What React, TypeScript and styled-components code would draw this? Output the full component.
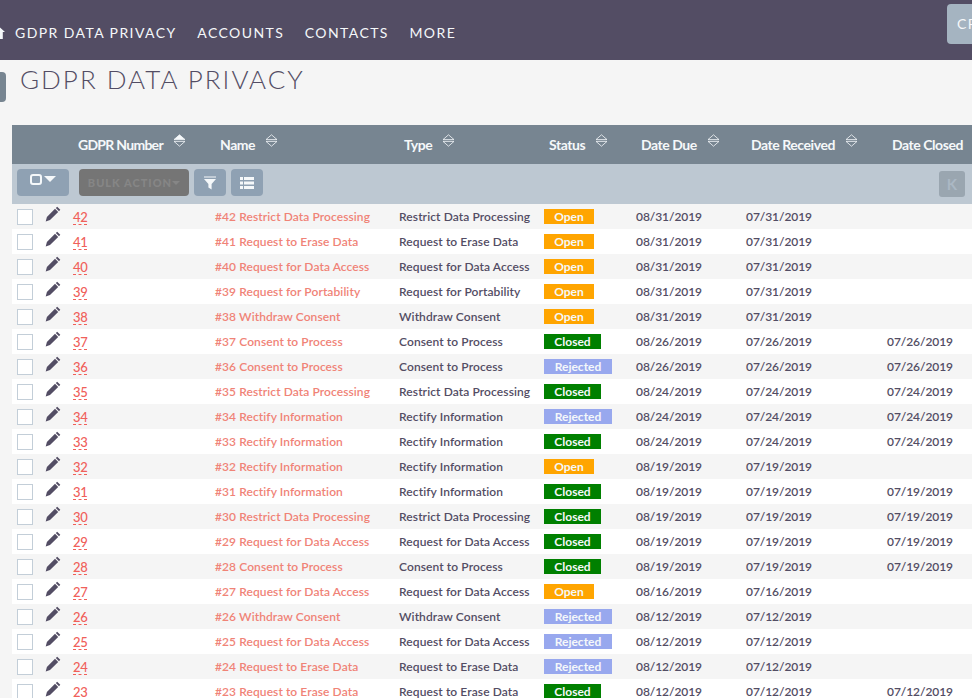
import React from 'react';
import styled, { createGlobalStyle } from 'styled-components';

type Status = 'Open' | 'Closed' | 'Rejected';
type Row = [number, string, Status, string, string, string];

const ROWS: Row[] = [
    [42, 'Restrict Data Processing', 'Open', '08/31/2019', '07/31/2019', ''],
    [41, 'Request to Erase Data', 'Open', '08/31/2019', '07/31/2019', ''],
    [40, 'Request for Data Access', 'Open', '08/31/2019', '07/31/2019', ''],
    [39, 'Request for Portability', 'Open', '08/31/2019', '07/31/2019', ''],
    [38, 'Withdraw Consent', 'Open', '08/31/2019', '07/31/2019', ''],
    [37, 'Consent to Process', 'Closed', '08/26/2019', '07/26/2019', '07/26/2019'],
    [36, 'Consent to Process', 'Rejected', '08/26/2019', '07/26/2019', '07/26/2019'],
    [35, 'Restrict Data Processing', 'Closed', '08/24/2019', '07/24/2019', '07/24/2019'],
    [34, 'Rectify Information', 'Rejected', '08/24/2019', '07/24/2019', '07/24/2019'],
    [33, 'Rectify Information', 'Closed', '08/24/2019', '07/24/2019', '07/24/2019'],
    [32, 'Rectify Information', 'Open', '08/19/2019', '07/19/2019', ''],
    [31, 'Rectify Information', 'Closed', '08/19/2019', '07/19/2019', '07/19/2019'],
    [30, 'Restrict Data Processing', 'Closed', '08/19/2019', '07/19/2019', '07/19/2019'],
    [29, 'Request for Data Access', 'Closed', '08/19/2019', '07/19/2019', '07/19/2019'],
    [28, 'Consent to Process', 'Closed', '08/19/2019', '07/19/2019', '07/19/2019'],
    [27, 'Request for Data Access', 'Open', '08/16/2019', '07/16/2019', ''],
    [26, 'Withdraw Consent', 'Rejected', '08/12/2019', '07/12/2019', ''],
    [25, 'Request for Data Access', 'Rejected', '08/12/2019', '07/12/2019', ''],
    [24, 'Request to Erase Data', 'Rejected', '08/12/2019', '07/12/2019', ''],
    [23, 'Request to Erase Data', 'Closed', '08/12/2019', '07/12/2019', '07/12/2019'],
];

const STATUS_BG: Record<Status, string> = {
    Open: '#ffa500',
    Closed: '#008000',
    Rejected: '#98a8ee',
};
const STATUS_W: Record<Status, number> = { Open: 50, Closed: 57, Rejected: 68 };

const COLS = '61px 142px 184px 145px 92px 110px 141px 200px';

const GlobalStyle = createGlobalStyle`
    html, body {
        margin: 0;
        padding: 0;
        height: 100%;
        overflow: hidden;
        background: #f5f5f5;
        font-family: Lato, "Liberation Sans", sans-serif;
    }
`;
const Page = styled.div`
    width: 972px;
    height: 698px;
    overflow: hidden;
`;
const TopBar = styled.div`
    height: 60px;
    background: #534d64;
    display: flex;
    align-items: flex-start;
    overflow: hidden;
    position: relative;
`;
const Nav = styled.nav`
    display: flex;
    align-items: center;
    height: 65px;
    margin-left: -8px;
`;
const NavItem = styled.a`
    color: #f5f8fa;
    font-size: 14px;
    letter-spacing: 1.42px;
    margin-right: 20.6px;
    white-space: nowrap;
`;
const HomeIcon = styled.svg`
    width: 13px;
    height: 13px;
    margin-right: 10px;
    flex: none;
`;
const CreateButton = styled.div`
    position: absolute;
    left: 947px;
    top: 4px;
    width: 80px;
    height: 40px;
    box-sizing: border-box;
    padding-left: 10px;
    background: #a5b4c1;
    border-radius: 4px;
    color: #f5f8fa;
    font-size: 14px;
    letter-spacing: 1.5px;
    line-height: 40px;
`;
const TitleRow = styled.div`
    height: 65px;
    display: flex;
    align-items: flex-start;
`;
const SideTab = styled.div`
    width: 6px;
    height: 30px;
    margin-top: 12px;
    background: #778591;
    border-radius: 0 4px 4px 0;
    flex: none;
`;
const Title = styled.h2`
    margin: 3px 0 0 14px;
    color: #534d64;
    font-size: 26px;
    line-height: 32px;
    font-weight: 300;
    letter-spacing: 2px;
    white-space: nowrap;
`;
const Table = styled.div`
    margin-left: 12px;
    width: 960px;
    overflow: hidden;
`;
const HeaderRow = styled.div`
    display: grid;
    grid-template-columns: ${COLS};
    height: 39px;
    background: #778591;
    align-items: center;
`;
const HeaderCell = styled.div<{ $tight?: boolean }>`
    display: flex;
    align-items: center;
    padding: 0 0 1px 5px;
    color: #f5f8fa;
    font-size: 14px;
    font-weight: 700;
    letter-spacing: ${(p) => (p.$tight ? '-0.72px' : '-0.45px')};
    white-space: nowrap;
`;
const SortIcon = styled.svg`
    width: 13px;
    height: 13px;
    margin-left: 10px;
    margin-top: -7px;
    flex: none;
`;
const Toolbar = styled.div`
    height: 40px;
    box-sizing: border-box;
    padding: 0 0 3px 5px;
    background: #bdc8d2;
    display: flex;
    align-items: center;
    position: relative;
`;
const ToolButton = styled.div<{ $w: number; $gap: number }>`
    width: ${(p) => p.$w}px;
    height: 27px;
    margin-right: ${(p) => p.$gap}px;
    background: #8fa1b3;
    border-radius: 4px;
    display: flex;
    align-items: center;
    justify-content: center;
    flex: none;
`;
const SelectGroup = styled.div`
    display: flex;
    align-items: center;
    margin-bottom: 7px;
`;
const BulkButton = styled.div`
    width: 110px;
    height: 27px;
    margin-right: 5px;
    background: #757575;
    border-radius: 4px;
    color: #868686;
    font-size: 11px;
    font-weight: 900;
    letter-spacing: 1px;
    display: flex;
    align-items: center;
    justify-content: center;
    white-space: nowrap;
    flex: none;
`;
const Caret = styled.span<{ $color: string; $size: number }>`
    width: 0;
    height: 0;
    border-left: ${(p) => p.$size}px solid transparent;
    border-right: ${(p) => p.$size}px solid transparent;
    border-top: ${(p) => p.$size}px solid ${(p) => p.$color};
`;
const CheckGlyph = styled.span`
    width: 8px;
    height: 7px;
    border: 2px solid #f5f8fa;
    border-radius: 3px;
    margin-right: 2px;
`;
const PagerButton = styled.div`
    position: absolute;
    left: 927px;
    top: 7px;
    width: 26px;
    height: 26px;
    background: #9aa6b0;
    border-radius: 3px;
    color: #abb8c4;
    font-size: 15px;
    font-weight: 700;
    display: flex;
    align-items: center;
    justify-content: center;
`;
const DataRow = styled.div<{ $odd: boolean }>`
    display: grid;
    grid-template-columns: ${COLS};
    height: 25px;
    align-items: center;
    background: ${(p) => (p.$odd ? '#ffffff' : '#f5f5f5')};
    font-size: 12px;
    white-space: nowrap;
`;
const ActionCell = styled.div`
    display: flex;
    align-items: center;
    padding-left: 5px;
`;
const CheckBox = styled.span`
    width: 14px;
    height: 14px;
    background: #fff;
    border: 1px solid #c3ced8;
    flex: none;
`;
const PencilIcon = styled.svg`
    width: 16px;
    height: 16px;
    margin-left: 12px;
    margin-top: -6px;
    flex: none;
`;
const NumberLink = styled.a`
    justify-self: start;
    color: #f0605a;
    font-size: 13px;
    font-weight: 500;
    letter-spacing: -0.3px;
    line-height: 14px;
    border-bottom: 1px dashed #f0605a;
    margin-top: 1px;
`;
const NameLink = styled.a`
    color: #f08377;
    font-weight: 600;
    letter-spacing: 0.08px;
`;
const TextCell = styled.div`
    color: #534d64;
    font-weight: 600;
    letter-spacing: 0.1px;
`;
const DateCell = styled.div`
    color: #534d64;
    font-weight: 600;
    letter-spacing: -0.08px;
`;
const Badge = styled.span<{ $status: Status }>`
    display: block;
    width: ${(p) => STATUS_W[p.$status]}px;
    height: 15px;
    line-height: 16px;
    text-align: center;
    color: #f5f8fa;
    font-weight: 700;
    background: ${(p) => STATUS_BG[p.$status]};
`;

const Sort: React.FC<{ active?: boolean }> = ({ active }) => (
    <SortIcon viewBox="0 0 13 13">
        <path d="M6.5 0.8 L12 5.6 H1 Z" fill={active ? '#f5f8fa' : 'none'} stroke="#f5f8fa" strokeWidth="0.8" />
        <path d="M1 7.4 H12 L6.5 12.2 Z" fill="none" stroke="#f5f8fa" strokeWidth="0.8" />
    </SortIcon>
);

const App: React.FC = () => {
    return (
        <Page>
            <GlobalStyle />
            <TopBar>
                <Nav>
                    <HomeIcon viewBox="0 0 13 13">
                        <path d="M6.5 0 L13 6 H10.8 V13 H2.2 V6 H0 Z" fill="#f5f8fa" />
                    </HomeIcon>
                    <NavItem>GDPR DATA PRIVACY</NavItem>
                    <NavItem>ACCOUNTS</NavItem>
                    <NavItem>CONTACTS</NavItem>
                    <NavItem>MORE</NavItem>
                </Nav>
                <CreateButton>CREATE</CreateButton>
            </TopBar>
            <TitleRow>
                <SideTab />
                <Title>GDPR DATA PRIVACY</Title>
            </TitleRow>
            <Table>
                <HeaderRow>
                    <div />
                    <HeaderCell $tight>GDPR Number<Sort active /></HeaderCell>
                    <HeaderCell>Name<Sort /></HeaderCell>
                    <HeaderCell>Type<Sort /></HeaderCell>
                    <HeaderCell>Status<Sort /></HeaderCell>
                    <HeaderCell>Date Due<Sort /></HeaderCell>
                    <HeaderCell>Date Received<Sort /></HeaderCell>
                    <HeaderCell>Date Closed<Sort /></HeaderCell>
                </HeaderRow>
                <Toolbar>
                    <ToolButton $w={52} $gap={10}>
                        <SelectGroup>
                            <CheckGlyph />
                            <Caret $color="#f5f8fa" $size={6} />
                        </SelectGroup>
                    </ToolButton>
                    <BulkButton>BULK ACTION<Caret $color="#868686" $size={4} /></BulkButton>
                    <ToolButton $w={32} $gap={5}>
                        <svg width="14" height="14" viewBox="0 0 14 14">
                            <path d="M1 0.5 H13 V1.5 H1 Z M1 3 H13 L8.6 8 V13.5 L5.4 11.5 V8 Z" fill="#f5f8fa" />
                        </svg>
                    </ToolButton>
                    <ToolButton $w={32} $gap={0}>
                        <svg width="14" height="12" viewBox="0 0 14 12">
                            <path d="M0 0 H3 V3 H0 Z M4 0 H14 V3 H4 Z M0 4.5 H3 V7.5 H0 Z M4 4.5 H14 V7.5 H4 Z M0 9 H3 V12 H0 Z M4 9 H14 V12 H4 Z" fill="#f5f8fa" />
                        </svg>
                    </ToolButton>
                    <PagerButton>K</PagerButton>
                </Toolbar>
                {ROWS.map(([id, type, status, due, received, closed], i) => (
                    <DataRow key={id} $odd={i % 2 === 1}>
                        <ActionCell>
                            <CheckBox />
                            <PencilIcon viewBox="0 0 16 16">
                                <path d="M12.2 0.7 L15.3 3.8 L14 5.2 L10.8 2 Z M10 2.8 L13.2 6 L5 14.1 L0.7 15.4 L1.9 11 Z" fill="#534d64" />
                            </PencilIcon>
                        </ActionCell>
                        <NumberLink>{id}</NumberLink>
                        <NameLink>#{id} {type}</NameLink>
                        <TextCell>{type}</TextCell>
                        <div><Badge $status={status}>{status}</Badge></div>
                        <DateCell>{due}</DateCell>
                        <DateCell>{received}</DateCell>
                        <DateCell>{closed}</DateCell>
                    </DataRow>
                ))}
            </Table>
        </Page>
    );
};

export default App;
